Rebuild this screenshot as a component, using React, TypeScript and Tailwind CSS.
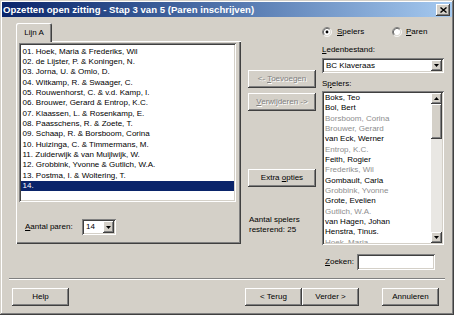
import React from 'react';

const raised =
  'shadow-[inset_-1px_-1px_#404040,inset_1px_1px_#ffffff,inset_-2px_-2px_#808080,inset_2px_2px_#d4d0c8]';
const sunken =
  'shadow-[inset_1px_1px_#808080,inset_-1px_-1px_#ffffff,inset_2px_2px_#404040,inset_-2px_-2px_#d4d0c8]';

const paren = [
  '01. Hoek, Maria & Frederiks, Wil',
  '02. de Lijster, P. & Koningen, N.',
  '03. Jorna, U. & Omlo, D.',
  '04. Witkamp, R. & Swaager, C.',
  '05. Rouwenhorst, C. & v.d. Kamp, I.',
  '06. Brouwer, Gerard & Entrop, K.C.',
  '07. Klaassen, L. & Rosenkamp, E.',
  '08. Paasschens, R. & Zoete, T.',
  '09. Schaap, R. & Borsboom, Corina',
  '10. Huizinga, C. & Timmermans, M.',
  '11. Zuiderwijk & van Muijlwijk, W.',
  '12. Grobbink, Yvonne & Gutlich, W.A.',
  '13. Postma, I. & Woltering, T.',
  '14.',
];

// used = al ingeschreven, grijs weergegeven
const spelers: { name: string; used?: boolean }[] = [
  { name: 'Boks, Teo' },
  { name: 'Bol, Bert' },
  { name: 'Borsboom, Corina', used: true },
  { name: 'Brouwer, Gerard', used: true },
  { name: 'van Eck, Werner' },
  { name: 'Entrop, K.C.', used: true },
  { name: 'Feith, Rogier' },
  { name: 'Frederiks, Wil', used: true },
  { name: 'Gombault, Carla' },
  { name: 'Grobbink, Yvonne', used: true },
  { name: 'Grote, Evelien' },
  { name: 'Gutlich, W.A.', used: true },
  { name: 'van Hagen, Johan' },
  { name: 'Henstra, Tinus.' },
  { name: 'Hoek, Maria', used: true },
];

function Radio({ checked }: { checked?: boolean }) {
  return (
    <svg width="10" height="10" viewBox="0 0 12 12">
      <circle cx="6" cy="6" r="4.5" fill="#ffffff" />
      <path d="M2.11 9.89 A5.5 5.5 0 0 1 9.89 2.11" stroke="#808080" fill="none" />
      <path d="M9.89 2.11 A5.5 5.5 0 0 1 2.11 9.89" stroke="#ffffff" fill="none" />
      <path d="M2.82 9.18 A4.5 4.5 0 0 1 9.18 2.82" stroke="#404040" fill="none" />
      <path d="M9.18 2.82 A4.5 4.5 0 0 1 2.82 9.18" stroke="#d4d0c8" fill="none" />
      {checked && <circle cx="6" cy="6" r="1.7" fill="#000000" />}
    </svg>
  );
}

function Arrow({ up }: { up?: boolean }) {
  return (
    <svg width="5" height="3" viewBox="0 0 5 3">
      <polygon points={up ? '0,3 5,3 2.5,0' : '0,0 5,0 2.5,3'} fill="#000000" />
    </svg>
  );
}

function Button({
  children,
  className = '',
  disabled,
}: {
  children: React.ReactNode;
  className?: string;
  disabled?: boolean;
}) {
  return (
    <div
      className={`flex items-center justify-center bg-[#d4d0c8] ${raised} ${
        disabled ? 'text-[#808080] [text-shadow:1px_1px_0_#ffffff]' : ''
      } ${className}`}
    >
      <span className="whitespace-pre">{children}</span>
    </div>
  );
}

export default function App() {
  return (
    <div className="w-[454px] h-[315px] overflow-hidden bg-[#d4d0c8] p-[2px] flex flex-col font-['Liberation_Sans',Arial,sans-serif] text-[8px] leading-[10px] text-black shadow-[inset_-1px_-1px_#404040,inset_1px_1px_#d4d0c8,inset_-2px_-2px_#808080,inset_2px_2px_#ffffff]">
      {/* titelbalk */}
      <div className="h-[15px] flex items-center bg-linear-to-r from-[#0a246a] to-[#a6caf0] pl-[1px] pr-[2px]">
        <span className="text-white font-bold text-[9.6px] whitespace-nowrap">
          Opzetten open zitting - Stap 3 van 5 (Paren inschrijven)
        </span>
        <div className={`ml-auto w-[14px] h-[12px] flex items-center justify-center bg-[#d4d0c8] ${raised}`}>
          <svg width="7" height="6" viewBox="0 0 7 6">
            <path d="M0.5 0.5 L6.5 5.5 M6.5 0.5 L0.5 5.5" stroke="#000000" strokeWidth="1.4" />
          </svg>
        </div>
      </div>

      <div className="flex pl-[14px] pt-[6px]">
        {/* links: tab met paren */}
        <div className="w-[225px] flex flex-col">
          <div className="relative z-10 -mb-[1px] w-[36px] h-[19px] rounded-t-[2px] bg-[#d4d0c8] flex items-center justify-center shadow-[inset_1px_1px_#ffffff,inset_-1px_0_#404040,inset_-2px_0_#808080]">
            Lijn A
          </div>
          <div className="h-[203px] flex flex-col pl-[3px] pt-[2px] shadow-[inset_1px_1px_#ffffff,inset_-1px_-1px_#404040,inset_-2px_-2px_#808080]">
            <div className={`w-[217px] h-[159px] bg-white p-[2px] ${sunken}`}>
              <div className="pt-[1.5px] leading-[10.35px]">
                {paren.map((p, i) => (
                  <div
                    key={p}
                    className={`h-[10.35px] pl-[1.5px] whitespace-nowrap ${
                      i === paren.length - 1 ? 'bg-[#0a246a] text-white' : ''
                    }`}
                  >
                    {p}
                  </div>
                ))}
              </div>
            </div>
            <div className="flex items-center mt-[17px] pl-[6px] h-[16px]">
              <span className="w-[57px]">
                <span className="underline">A</span>antal paren:
              </span>
              <div className={`w-[34px] h-[16px] bg-white p-[2px] flex ${sunken}`}>
                <span className="flex-1 pl-[2px] flex items-center">14</span>
                <div className={`w-[11px] h-full flex items-center justify-center bg-[#d4d0c8] ${raised}`}>
                  <Arrow />
                </div>
              </div>
            </div>
          </div>
        </div>

        {/* midden: knoppen */}
        <div className="ml-[7px] w-[68px] flex flex-col pt-[47px]">
          <Button disabled className="h-[18px]">
            &lt;- <span className="underline">T</span>oevoegen
          </Button>
          <Button disabled className="h-[18px] mt-[5px]">
            <span className="underline">V</span>erwijderen -&gt;
          </Button>
          <Button className="h-[18px] mt-[58px]">
            Extra <span className="underline">o</span>pties
          </Button>
          <div className="mt-[28px] pl-[1px] leading-[10.35px]">
            Aantal spelers
            <br />
            resterend: 25
          </div>
        </div>

        {/* rechts: spelers */}
        <div className="ml-[6px] w-[122px] flex flex-col">
          <div className="flex items-center h-[10px] mt-[4px]">
            <div className="w-[70px] flex items-center gap-[5px]">
              <Radio checked />
              <span>
                <span className="underline">S</span>pelers
              </span>
            </div>
            <div className="flex items-center gap-[4px]">
              <Radio />
              <span>
                <span className="underline">P</span>aren
              </span>
            </div>
          </div>
          <div className="mt-[8px] h-[10px]">
            <span className="underline">L</span>edenbestand:
          </div>
          <div className={`mt-[3px] h-[15px] bg-white p-[2px] flex ${sunken}`}>
            <span className="flex-1 pl-[2px] flex items-center">BC Klaveraas</span>
            <div className={`w-[11px] h-full flex items-center justify-center bg-[#d4d0c8] ${raised}`}>
              <Arrow />
            </div>
          </div>
          <div className="mt-[6px] h-[10px]">
            S<span className="underline">p</span>elers:
          </div>
          <div className={`mt-[2px] h-[154px] bg-white p-[2px] flex ${sunken}`}>
            <div className="flex-1 overflow-hidden leading-[10.35px] pl-[1px]">
              {spelers.map((s) => (
                <div key={s.name} className={`h-[10.35px] whitespace-nowrap ${s.used ? 'text-[#8e8e8e]' : ''}`}>
                  {s.name}
                </div>
              ))}
            </div>
            <div className="w-[11px] flex flex-col bg-[#e9e7e3]">
              <div className={`h-[11px] flex items-center justify-center bg-[#d4d0c8] ${raised}`}>
                <Arrow up />
              </div>
              <div className={`h-[35px] bg-[#d4d0c8] ${raised}`} />
              <div className={`mt-auto h-[11px] flex items-center justify-center bg-[#d4d0c8] ${raised}`}>
                <Arrow />
              </div>
            </div>
          </div>
          <div className="mt-[9px] w-[113px] h-[16px] flex items-center justify-end gap-[3px]">
            <span>
              <span className="underline">Z</span>oeken:
            </span>
            <div className={`w-[78px] h-[16px] bg-white ${sunken}`} />
          </div>
        </div>
      </div>

      {/* scheidingslijn */}
      <div className="mt-[8px] mx-[7px] h-[2px] border-t border-t-[#808080] border-b border-b-white" />

      {/* onderste knoppen */}
      <div className="flex mt-[8px] pl-[10px]">
        <Button className="w-[57px] h-[18px]">Help</Button>
        <Button className="w-[57px] h-[18px] ml-[176px]">&lt; Terug</Button>
        <Button className="w-[57px] h-[18px]">Verder &gt;</Button>
        <Button className="w-[57px] h-[18px] ml-[23px]">Annuleren</Button>
      </div>
    </div>
  );
}
